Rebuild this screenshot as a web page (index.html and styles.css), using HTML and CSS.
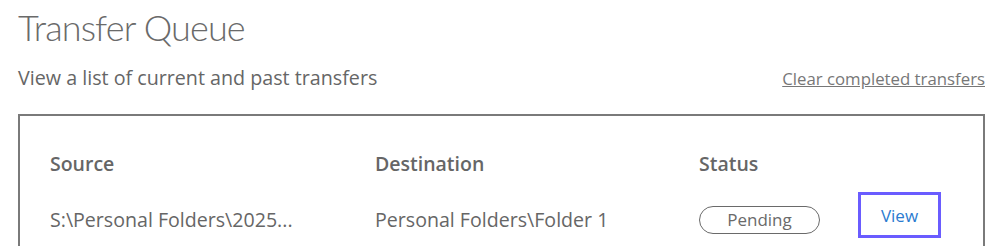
FILE: index.html
```html
<!DOCTYPE html>
<html lang="en">
<head>
<meta charset="utf-8">
<title>Transfer Queue</title>
<link rel="stylesheet" href="styles.css">
</head>
<body>
<main class="page">
  <h1 class="title">Transfer Queue</h1>
  <div class="subbar">
    <p class="subtitle">View a list of current and past transfers</p>
    <a class="clear-link" href="#">Clear completed transfers</a>
  </div>
  <section class="queue">
    <div class="grid">
      <div class="head">Source</div>
      <div class="head">Destination</div>
      <div class="head">Status</div>
      <div class="head"></div>
      <div class="cell">S:\Personal Folders\2025...</div>
      <div class="cell">Personal Folders\Folder 1</div>
      <div class="cell"><span class="pill">Pending</span></div>
      <div class="cell"><button class="view-btn" type="button">View</button></div>
    </div>
  </section>
</main>
</body>
</html>
```

FILE: styles.css
```css
html, body {
  margin: 0;
  padding: 0;
  background: #ffffff;
}

body {
  font-family: "Open Sans", "Noto Sans", "Liberation Sans", sans-serif;
  color: #666666;
}

.page {
  padding: 5px 22px 0 18px;
}

.title {
  margin: 0;
  font-family: "Lato", "Open Sans", sans-serif;
  font-size: 36px;
  font-weight: 300;
  line-height: 44px;
  letter-spacing: -0.85px;
  color: #6a6a6a;
}

.subbar {
  display: flex;
  justify-content: space-between;
  align-items: baseline;
  margin-top: 15px;
}

.subtitle {
  margin: 0;
  font-size: 19.7px;
  line-height: 28px;
  color: #666666;
}

.clear-link {
  font-size: 16.8px;
  color: #777777;
  text-decoration: underline;
}

.queue {
  margin-top: 22px;
  border: 2px solid #7a7a7a;
  border-bottom: none;
  height: 160px;
  padding: 26px 0 0 30px;
}

.grid {
  display: grid;
  grid-template-columns: 325px 324px 159px auto;
  align-items: center;
}

.head {
  font-size: 19.5px;
  font-weight: 600;
  line-height: 44px;
  color: #666666;
}

.cell {
  font-size: 19.6px;
  line-height: 28px;
  color: #666666;
  padding-top: 6px;
  display: flex;
  align-items: center;
}

.pill {
  display: inline-flex;
  justify-content: center;
  align-items: center;
  width: 119px;
  height: 26px;
  margin-top: 1px;
  border: 1.5px solid #6a6a6a;
  border-radius: 15px;
  font-size: 17px;
  color: #6a6a6a;
}

.view-btn {
  display: inline-flex;
  justify-content: center;
  align-items: center;
  width: 83px;
  height: 46px;
  margin-bottom: 9px;
  border: 3px solid #6a5cff;
  background: #ffffff;
  font-family: inherit;
  font-size: 17px;
  color: #2b7bd0;
  padding: 0;
}
```
